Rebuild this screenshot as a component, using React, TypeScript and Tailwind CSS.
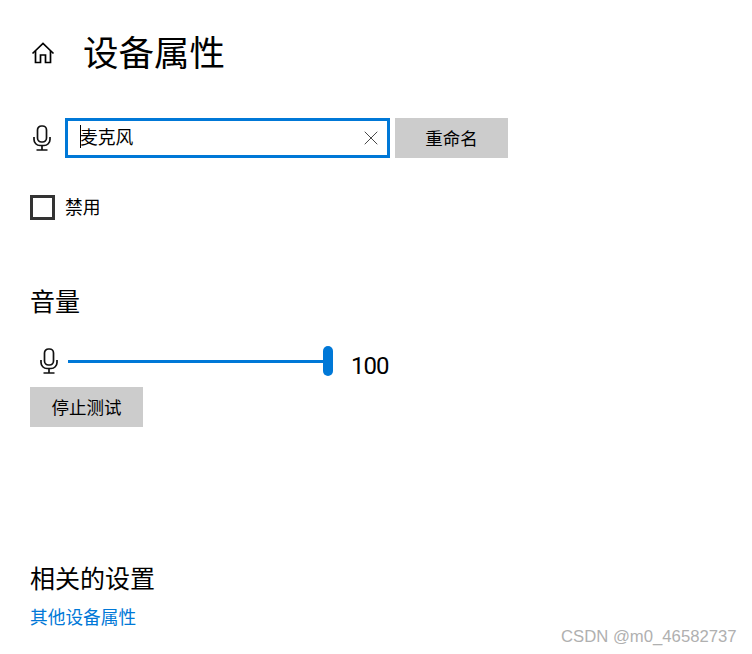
import { X } from 'lucide-react';

const font = { fontFamily: '"Noto Sans CJK SC", "Liberation Sans", sans-serif' };

function HomeIcon() {
  return (
    <svg width="24" height="24" viewBox="0 0 24 24" fill="none" stroke="#000" strokeWidth="1.7">
      <path d="M1.500 12.500 12 2.500l10.500 10" />
      <path d="M4.500 10v11.500h5V14h5v7.500h5V10" />
    </svg>
  );
}

function MicIcon() {
  return (
    <svg width="18" height="26" viewBox="0 0 18 26" fill="none" stroke="#111" strokeWidth="1.7">
      <rect x="4.500" y="1" width="9" height="16" rx="4" />
      <path d="M1 12v2.500a6 6 0 0 0 6 6h4a6 6 0 0 0 6-6V12" />
      <path d="M9 20.500V25M3.500 25h11" />
    </svg>
  );
}

function GrayButton({ label, width }: { label: string; width: string }) {
  return (
    <button className={`h-10 bg-[#cccccc] text-[17.5px] text-black flex items-center justify-center ${width}`}>
      {label}
    </button>
  );
}

export default function App() {
  return (
    <div className="relative w-[752px] h-[654px] bg-white overflow-hidden text-black" style={font}>
      <div className="flex flex-col pl-[30px]">
        {/* header */}
        <div className="flex items-center h-[50px] mt-[26px]">
          <div className="ml-[1px] mt-[3px] w-[52px]"><HomeIcon /></div>
          <h1 className="text-[35.500px] leading-[50px]">设备属性</h1>
        </div>

        {/* name row */}
        <div className="flex items-center mt-[42px]">
          <div className="ml-[3px] w-[32px]"><MicIcon /></div>
          <div className="w-[325px] h-10 border-[3px] border-[#0078d7] flex items-center justify-between pl-[12px] pr-[4px]">
            <div className="relative text-[17.800px] leading-[26px] -mt-[5px]">
              <span className="absolute left-0 top-[2px] w-px h-[23px] bg-black" />
              麦克风
            </div>
            <X size={24} strokeWidth={0.9} color="#333" />
          </div>
          <div className="ml-[5px]"><GrayButton label="重命名" width="w-[113px]" /></div>
        </div>

        {/* disable */}
        <div className="flex items-center mt-[37px]">
          <div className="w-[25px] h-[25px] border-[3px] border-[#333333]" />
          <span className="ml-[10px] -mt-[3px] text-[17.800px] leading-[26px]">禁用</span>
        </div>

        {/* volume */}
        <h2 className="text-[25px] leading-[36px] mt-[62px]">音量</h2>
        <div className="flex items-center h-[30px] mt-[28px]">
          <div className="ml-[10px] w-[28px]"><MicIcon /></div>
          <div className="relative w-[265px] h-[30px] flex items-center">
            <div className="w-[258px] h-[3px] bg-[#0078d7]" />
            <div className="absolute right-0 top-0 w-[10px] h-[30px] rounded-[5px] bg-[#0078d7]" />
          </div>
          <span className="ml-[18px] mt-[10px] text-[24px] leading-[30px] tracking-[-1px]" style={{ fontFamily: 'Roboto, "Liberation Sans", sans-serif' }}>100</span>
        </div>
        <div className="mt-[11px]"><GrayButton label="停止测试" width="w-[113px]" /></div>

        {/* related */}
        <h2 className="text-[25px] leading-[36px] mt-[132px]">相关的设置</h2>
        <a className="text-[17.700px] leading-[26px] text-[#0078d7] mt-[8px] w-fit">其他设备属性</a>
      </div>

      <span className="absolute left-[561px] top-[627px] text-[16.700px] leading-[20px] text-[#b0b0b0]" style={{ fontFamily: '"Liberation Sans", sans-serif' }}>
        CSDN @m0_46582737
      </span>
    </div>
  );
}
